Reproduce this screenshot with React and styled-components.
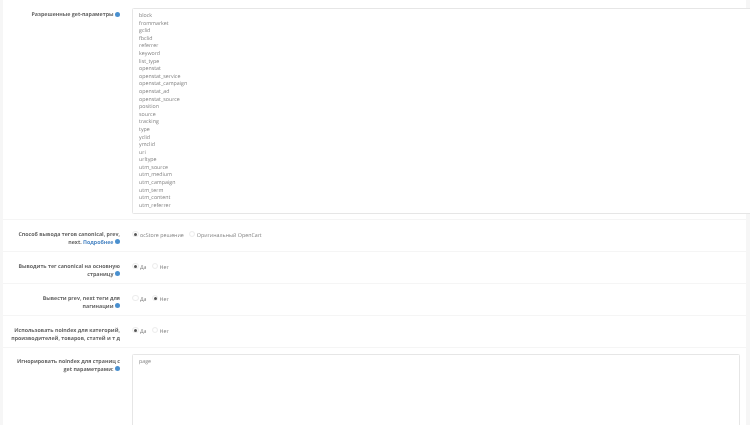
import React from 'react'
import styled, { createGlobalStyle } from 'styled-components'

const GlobalStyle = createGlobalStyle`
    html, body {
        margin: 0;
        padding: 0;
        background: #fff;
        overflow: hidden;
    }
    body {
        font-family: "Open Sans", "Noto Sans", sans-serif;
        font-size: 5.3px;
        color: #666;
        text-rendering: geometricPrecision;
    }
`;

const Page = styled.div`
    width: 750px;
    height: 425px;
    overflow: hidden;
    background: #f6f6f6;
    padding-left: 3px;
    box-sizing: border-box;
    filter: blur(0.3px);
`;

const Form = styled.div`
    background: #fff;
    width: 743px;
    height: 425px;
`;

const Row = styled.div`
    display: grid;
    grid-template-columns: 117px 1fr;
    column-gap: 12px;
    box-sizing: border-box;
    height: ${props => props.h ? `${props.h}px` : 'auto'};
    padding: ${props => props.pad || '11px 0 0'};
    border-bottom: 1px solid #f5f5f5;
    &:last-child { border-bottom: 0; }
`;

const Label = styled.label`
    box-sizing: border-box;
    padding-left: 7.4px;
    padding-top: ${props => props.top || '0'};
    text-align: right;
    font-weight: 700;
    line-height: 7.6px;
    color: #666;
`;

const Help = styled.span`
    display: inline-block;
    width: 5px;
    height: 5px;
    margin-left: 1.5px;
    border-radius: 50%;
    background: #4a90cf;
    vertical-align: -0.5px;
`;

const More = styled.a`
    color: #4a86c4;
`;

const TextArea = styled.div`
    box-sizing: border-box;
    width: ${props => props.w}px;
    height: ${props => props.h}px;
    padding: 3px 6px;
    background: #fff;
    border: 1px solid #e6e6e6;
    border-radius: 1.5px;
    line-height: 7.6px;
    color: #808080;
    white-space: pre-line;
`;

const Options = styled.div`
    display: flex;
    align-items: flex-start;
    gap: 5px;
`;

const Option = styled.span`
    display: inline-flex;
    align-items: flex-start;
    gap: 1.5px;
    line-height: 8px;
    color: #808080;
`;

const Radio = styled.i`
    position: relative;
    display: inline-block;
    flex: none;
    box-sizing: border-box;
    width: 6.5px;
    height: 6.5px;
    margin-top: -0.5px;
    border: 0.5px solid #ececec;
    border-radius: 50%;
    &::after {
        content: "";
        display: ${props => props.checked ? 'block' : 'none'};
        position: absolute;
        left: 1.25px;
        top: 1.25px;
        width: 3px;
        height: 3px;
        border-radius: 50%;
        background: #555;
    }
`;

const params = `block
frommarket
gclid
fbclid
referrer
keyword
list_type
openstat
openstat_service
openstat_campaign
openstat_ad
openstat_source
position
source
tracking
type
yclid
ymclid
uri
urltype
utm_source
utm_medium
utm_campaign
utm_term
utm_content
utm_referrer`;

const RadioRow = ({label, first, second, selected}) => (
    <Row h={32}>
        <Label>{label}</Label>
        <Options>
            <Option><Radio checked={selected === 0} />{first}</Option>
            <Option><Radio checked={selected === 1} />{second}</Option>
        </Options>
    </Row>
);

const App = () => (
    <Page>
        <GlobalStyle />
        <Form>
            <Row h={220} pad="8px 0 0">
                <Label top="3px">Разрешенные get-параметры<Help /></Label>
                <TextArea w={640} h={206}>{params}</TextArea>
            </Row>
            <RadioRow
                label={<>Способ вывода тегов canonical, prev, next. <More>Подробнее</More><Help /></>}
                first="ocStore решение"
                second="Оригинальный OpenCart"
                selected={0}
            />
            <RadioRow
                label={<>Выводить тег canonical на основную страницу<Help /></>}
                first="Да"
                second="Нет"
                selected={0}
            />
            <RadioRow
                label={<>Вывести prev, next теги для пагинации<Help /></>}
                first="Да"
                second="Нет"
                selected={1}
            />
            <RadioRow
                label={<>Использовать noindex для категорий, производителей, товаров, статей и т д</>}
                first="Да"
                second="Нет"
                selected={0}
            />
            <Row pad="6px 0 0">
                <Label top="4px">Игнорировать noindex для страниц с get параметрами:<Help /></Label>
                <TextArea w={608} h={120}>page</TextArea>
            </Row>
        </Form>
    </Page>
);

export default App;
